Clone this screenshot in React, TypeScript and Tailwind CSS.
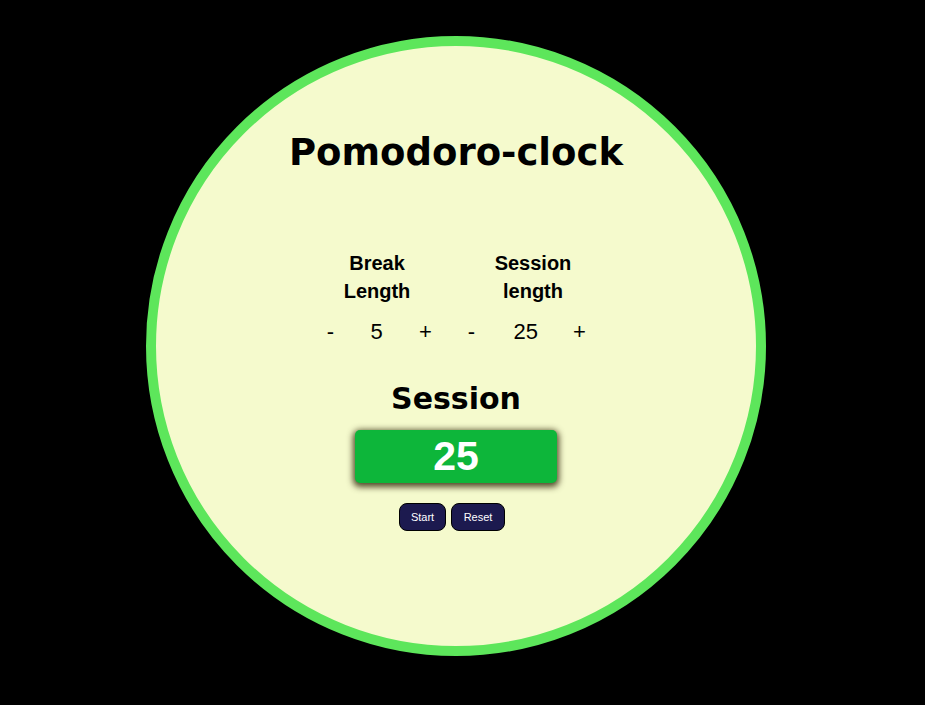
export default function App() {
  return (
    <main className="w-full h-[705px] bg-black pt-[36px] pl-[146px] overflow-hidden">
      <div className="w-[620px] h-[620px] rounded-full border-[10px] border-[#5de65b] bg-[#f5facd] flex flex-col items-center pt-[88px]">
        <h1 className="text-[37px] font-bold text-black leading-none font-['DejaVu_Sans',sans-serif]">
          Pomodoro-clock
        </h1>
        <div className="flex flex-row gap-[36px] mt-[78px] mr-[2px] font-['Liberation_Sans',Arial,sans-serif] text-black">
          <div className="w-[120px] text-[20px] font-bold leading-[28px] text-center">
            Break
            <br />
            Length
          </div>
          <div className="w-[120px] text-[20px] font-bold leading-[28px] text-center">
            Session
            <br />
            length
          </div>
        </div>
        <div className="flex flex-row items-center mt-[10px] mr-[2px] text-[22px] text-black font-['Liberation_Sans',Arial,sans-serif]">
          <span className="w-[20px] text-center">-</span>
          <span className="w-[20px] text-center ml-[26px]">5</span>
          <span className="w-[20px] text-center ml-[29px]">+</span>
          <span className="w-[20px] text-center ml-[26px]">-</span>
          <span className="w-[20px] text-center ml-[32px]">25</span>
          <span className="w-[20px] text-center ml-[36px]">+</span>
        </div>
        <h2 className="text-[30px] font-bold text-black leading-none mt-[36px] font-['DejaVu_Sans',sans-serif]">
          Session
        </h2>
        <div className="w-[202px] h-[53px] mt-[16px] rounded-[5px] bg-[#0db63a] shadow-[0_2px_6px_2px_rgba(40,30,0,0.8)] flex items-center justify-center text-white text-[41px] font-bold font-['Liberation_Sans',Arial,sans-serif]">
          25
        </div>
        <div className="flex flex-row gap-[5px] mt-[20px] pr-[8px] font-['Liberation_Sans',Arial,sans-serif]">
          <button className="w-[47px] h-[28px] rounded-[8px] bg-[#1c1a4f] border border-black text-white text-[11px]">
            Start
          </button>
          <button className="w-[54px] h-[28px] rounded-[8px] bg-[#1c1a4f] border border-black text-white text-[11px]">
            Reset
          </button>
        </div>
      </div>
    </main>
  );
}
